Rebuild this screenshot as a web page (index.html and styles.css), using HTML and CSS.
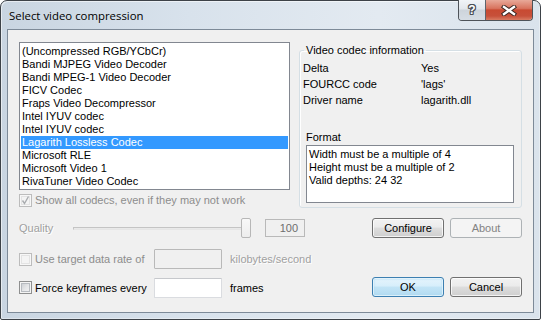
FILE: index.html
```html
<!DOCTYPE html>
<html>
<head>
<meta charset="utf-8">
<title>Select video compression</title>
<link rel="stylesheet" href="styles.css">
</head>
<body>
<div class="window">
  <div class="titlebar">
    <span class="title">Select video compression</span>
    <div class="caption-btns">
      <div class="cbtn help"><span class="qmark">?</span></div>
      <div class="cbtn close">
        <svg width="16" height="11" viewBox="0 0 16 11">
          <path d="M3 2 L13 9 M13 2 L3 9" stroke="#3a2622" stroke-width="4.4" stroke-linecap="square" fill="none"/>
          <path d="M3 2 L13 9 M13 2 L3 9" stroke="#ffffff" stroke-width="2.4" stroke-linecap="square" fill="none"/>
        </svg>
      </div>
    </div>
  </div>
  <div class="client">
    <div class="top">
      <ul class="listbox">
        <li>(Uncompressed RGB/YCbCr)</li>
        <li>Bandi MJPEG Video Decoder</li>
        <li>Bandi MPEG-1 Video Decoder</li>
        <li>FICV Codec</li>
        <li>Fraps Video Decompressor</li>
        <li>Intel IYUV codec</li>
        <li>Intel IYUV codec</li>
        <li class="sel">Lagarith Lossless Codec</li>
        <li>Microsoft RLE</li>
        <li>Microsoft Video 1</li>
        <li>RivaTuner Video Codec</li>
      </ul>
      <div class="showall">
        <span class="cb disabled">
          <svg width="11" height="11" viewBox="0 0 11 11"><path d="M2.5 5.5 L4.5 8.5 L8.5 1.5" stroke="#a9acaf" stroke-width="1.4" fill="none"/></svg>
        </span>
        <span class="cbtext gray">Show all codecs, even if they may not work</span>
      </div>
      <fieldset class="group">
        <legend>Video codec information</legend>
        <div class="info">
          <div class="irow"><span class="k">Delta</span><span>Yes</span></div>
          <div class="irow"><span class="k">FOURCC code</span><span>'lags'</span></div>
          <div class="irow"><span class="k">Driver name</span><span>lagarith.dll</span></div>
        </div>
        <div class="format-label">Format</div>
        <div class="format-box">Width must be a multiple of 4<br>Height must be a multiple of 2<br>Valid depths: 24 32</div>
      </fieldset>
    </div>

    <div class="ctlrow r3">
      <span class="quality-label">Quality</span>
      <div class="slider"><div class="track"></div><div class="thumb"></div></div>
      <div class="num">100</div>
      <div class="btns">
        <div class="btn">Configure</div>
        <div class="btn disabled">About</div>
      </div>
    </div>

    <div class="ctlrow r4">
      <div class="cblabel">
        <span class="cb disabled"></span>
        <span class="gray">Use target data rate of</span>
      </div>
      <div class="edit disabled"></div>
      <span class="unit dim">kilobytes/second</span>
    </div>

    <div class="ctlrow r5">
      <div class="cblabel">
        <span class="cb"></span>
        <span>Force keyframes every</span>
      </div>
      <div class="edit"></div>
      <span class="unit">frames</span>
      <div class="btns">
        <div class="btn default">OK</div>
        <div class="btn">Cancel</div>
      </div>
    </div>
  </div>
</div>
</body>
</html>
```

FILE: styles.css
```css
* { box-sizing: border-box; }
html, body { margin: 0; padding: 0; }
body {
  width: 541px;
  height: 320px;
  overflow: hidden;
  background: #ffffff;
  font-family: "Liberation Sans", Arial, sans-serif;
  font-size: 11px;
  color: #000;
}

.window {
  width: 541px;
  height: 320px;
  border: 1px solid #3d4248;
  border-radius: 7px 7px 2px 2px;
  background: linear-gradient(to right, #c9d5e1 0%, #d8e2ec 35%, #e3eaf1 70%, #dae3ec 100%);
  padding: 0 6px 6px 6px;
  display: flex;
  flex-direction: column;
  box-shadow: inset 1px 1px 0 rgba(255,255,255,.55), inset -1px -1px 0 rgba(255,255,255,.35);
}

.titlebar {
  height: 28px;
  flex: none;
  display: flex;
  align-items: flex-start;
}
.title {
  font-family: "Open Sans", "Noto Sans", sans-serif;
  font-size: 11.4px;
  line-height: 29px;
  margin-left: 2px;
  color: #000;
}
.caption-btns {
  margin-left: auto;
  margin-right: 1px;
  margin-top: -1px;
  display: flex;
  height: 21px;
  border: 1px solid #4e5359;
  border-top: none;
  border-radius: 0 0 4px 4px;
  overflow: hidden;
}
.cbtn {
  display: flex;
  align-items: center;
  justify-content: center;
}
.help {
  width: 27px;
  border-right: 1px solid #5d646c;
  background: linear-gradient(#f1f4f7 0%, #e2e7ec 45%, #cdd4db 50%, #d6dde4 100%);
}
.qmark {
  font-family: "Liberation Sans", sans-serif;
  font-weight: bold;
  font-size: 12px;
  color: #fff;
  text-shadow: 1px 0 0 #4a4f55, -1px 0 0 #4a4f55, 0 1px 0 #4a4f55, 0 -1px 0 #4a4f55,
               1px 1px 0 #4a4f55, -1px -1px 0 #4a4f55, 1px -1px 0 #4a4f55, -1px 1px 0 #4a4f55;
  line-height: 12px;
}
.close {
  width: 46px;
  background: linear-gradient(#e8a999 0%, #d8735e 42%, #c84a32 50%, #c7503a 80%, #d87b62 100%);
}

.client {
  flex: 1;
  background: #f0f0f0;
  border: 1px solid #7d8a98;
  padding: 12px 11px 0 11px;
  display: flex;
  flex-direction: column;
}

.top {
  display: grid;
  grid-template-columns: 271px 223px;
  grid-template-rows: 148px 17px;
  column-gap: 9px;
}
.listbox {
  grid-column: 1;
  grid-row: 1;
  margin: 0;
  padding: 2px 1px;
  list-style: none;
  border: 1px solid #828790;
  background: #fff;
  height: 148px;
}
.listbox li {
  height: 13px;
  line-height: 13px;
  padding-left: 1px;
  white-space: nowrap;
}
.listbox li.sel {
  background: #3399ff;
  color: #fff;
}

.showall {
  grid-column: 1;
  grid-row: 2;
  display: flex;
  align-items: flex-end;
  gap: 3px;
}
.cbtext { line-height: 13px; }

.gray { color: #8d8d8d; }
.dim { color: #a0a0a0; text-shadow: 1px 1px 0 #ffffff; }

.cb {
  width: 13px;
  height: 13px;
  flex: none;
  display: inline-flex;
  align-items: center;
  justify-content: center;
  border: 1px solid #8e8f8f;
  background: linear-gradient(135deg, #c3c7cc 0%, #e6e7e9 55%, #f6f6f6 100%);
  box-shadow: inset 0 0 0 1px #f4f4f4, inset 0 0 0 2px #b7bbc0;
}
.cb.disabled {
  border-color: #bcbcbc;
  background: #f4f4f4;
  box-shadow: inset 0 0 0 1px #f7f7f7, inset 0 0 0 2px #e3e3e3;
}

.group {
  grid-column: 2;
  grid-row: 1 / 3;
  margin: 2px 0 0 0;
  padding: 3px 0 4px 3px;
  border: 1px solid #d5dfe5;
  border-radius: 3px;
  height: 164px;
  min-width: 0;
  box-shadow: inset 1px 1px 0 #ffffff;
}
.group legend {
  margin-left: 1px;
  padding: 0 2px;
  line-height: 13px;
  font-size: 11px;
}
.irow {
  display: flex;
  height: 16px;
  line-height: 16px;
}
.k { width: 118px; }
.format-label {
  margin-top: 23px;
  margin-left: 3px;
  margin-bottom: 1px;
  line-height: 13px;
}
.format-box {
  margin-left: 3px;
  width: 208px;
  height: 58px;
  border: 1px solid #828790;
  background: #fff;
  padding: 2px 2px;
  line-height: 13px;
}

.ctlrow {
  display: flex;
  align-items: center;
}
.r3 { margin-top: 11px; height: 20px; }
.r4 { margin-top: 11px; height: 20px; }
.r5 { margin-top: 8px; height: 21px; }

.quality-label {
  width: 54px;
  color: #a0a0a0;
  text-shadow: 1px 1px 0 #ffffff;
}
.slider {
  display: flex;
  align-items: center;
  width: 178px;
  height: 20px;
}
.track {
  width: 172px;
  height: 3px;
  border: 1px solid #c4c4c4;
  border-bottom-color: #e6e6e6;
  background: #e9e9e9;
}
.thumb {
  width: 10px;
  height: 20px;
  margin-left: -4px;
  border: 1px solid #b7b7b7;
  border-radius: 2px;
  background: linear-gradient(#f8f8f8, #ededed);
}
.num {
  margin-left: 14px;
  width: 40px;
  height: 18px;
  border: 1px solid #b9b9b9;
  background: #f0f0f0;
  text-align: right;
  padding-right: 6px;
  line-height: 16px;
  color: #6d6d6d;
}

.btns {
  margin-left: auto;
  display: flex;
  gap: 6px;
}
.r5 .btns { align-self: flex-start; }
.btn {
  width: 72px;
  height: 20px;
  border: 1px solid #707070;
  border-radius: 3px;
  background: linear-gradient(#f2f2f2 0%, #ebebeb 45%, #dddddd 50%, #cfcfcf 100%);
  box-shadow: inset 0 0 0 1px rgba(255,255,255,.75);
  text-align: center;
  line-height: 18px;
}
.btn.disabled {
  border-color: #adb2b5;
  background: #f4f4f4;
  color: #838383;
  box-shadow: none;
}
.btn.default {
  border-color: #3c7fb1;
  background: linear-gradient(#e5f4fc 0%, #d7eefb 45%, #c2e4f6 50%, #b3dbf1 100%);
  box-shadow: inset 0 0 0 1px rgba(255,255,255,.6), inset 0 0 2px 1px #a6d8f3;
}

.cblabel {
  width: 135px;
  flex: none;
  display: flex;
  align-items: center;
  gap: 3px;
}
.edit {
  width: 68px;
  height: 20px;
  flex: none;
  background: #fff;
  border: 1px solid #dadce0;
  border-top-color: #c6c8cc;
  border-radius: 1px;
}
.edit.disabled {
  background: #f0f0f0;
  border-color: #b9b9b9;
}
.r5 .edit { align-self: flex-end; }
.unit { margin-left: 8px; }
```
